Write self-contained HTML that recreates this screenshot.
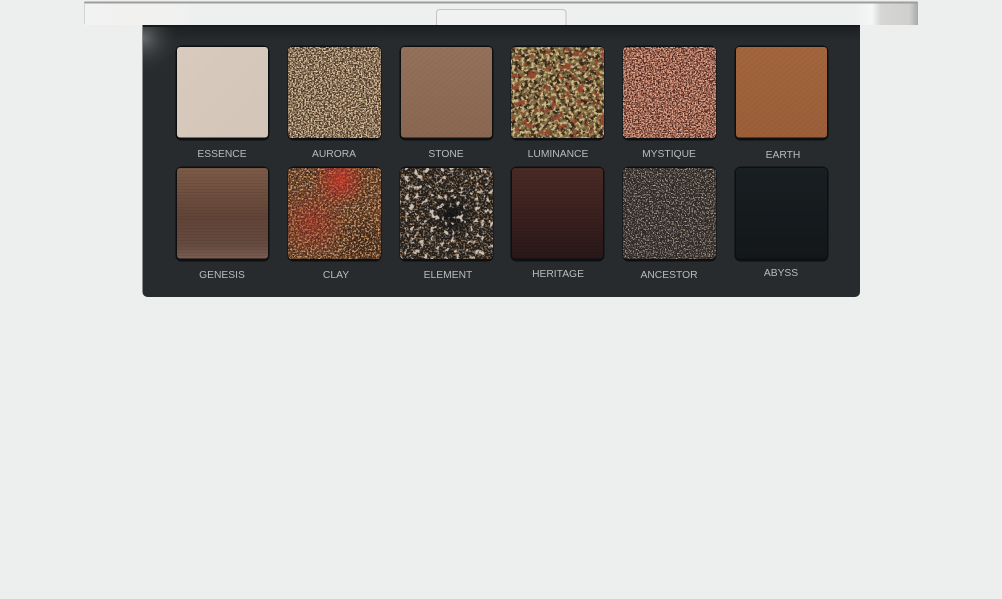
<!DOCTYPE html>
<html lang="en">
<head>
<meta charset="utf-8">
<title>Eyeshadow Palette</title>
<style>
html,body{margin:0;padding:0;background:#edefee;width:1002px;height:599px;overflow:hidden}
svg{display:block}
text{font-family:"Liberation Sans",sans-serif;font-size:10.3px;fill:#b9bcbe;text-anchor:middle}
</style>
</head>
<body>
<svg width="1002" height="599" viewBox="0 0 1002 599" xmlns="http://www.w3.org/2000/svg">
<defs>
<linearGradient id="lid" x1="0" x2="1" y1="0" y2="0">
<stop offset="0" stop-color="#f1f2f1"/><stop offset=".1" stop-color="#f1f1f0"/><stop offset=".13" stop-color="#eef0ef"/>
<stop offset=".925" stop-color="#eef0ef"/><stop offset=".945" stop-color="#f6f6f6"/><stop offset=".955" stop-color="#d6d6d5"/><stop offset=".99" stop-color="#cfcfce"/><stop offset="1" stop-color="#a8a8a7"/>
</linearGradient>
<linearGradient id="band" x1="0" x2="0" y1="0" y2="1"><stop offset="0" stop-color="#1c2023"/><stop offset="1" stop-color="#272b2e"/></linearGradient>
<radialGradient id="shine" gradientUnits="userSpaceOnUse" cx="143" cy="38" r="38">
<stop offset="0" stop-color="#7a7d7d" stop-opacity=".8"/><stop offset=".45" stop-color="#54585a" stop-opacity=".4"/><stop offset="1" stop-color="#272b2e" stop-opacity="0"/>
</radialGradient>
<linearGradient id="ess" x1="0" y1="0" x2="1" y2="1"><stop offset="0" stop-color="#d8cbbe"/><stop offset="1" stop-color="#d3c5b8"/></linearGradient>
<linearGradient id="sto" x1="0" y1="0" x2="0" y2="1"><stop offset="0" stop-color="#94715b"/><stop offset="1" stop-color="#8a6751"/></linearGradient>
<linearGradient id="ear" x1="0" y1="0" x2="0" y2="1"><stop offset="0" stop-color="#a3653d"/><stop offset="1" stop-color="#9c5f39"/></linearGradient>
<linearGradient id="gen" x1="0" y1="0" x2="0" y2="1"><stop offset="0" stop-color="#7c5a47"/><stop offset=".55" stop-color="#614437"/><stop offset=".85" stop-color="#654a3f"/><stop offset="1" stop-color="#7a5c52"/></linearGradient>
<linearGradient id="her" x1="0" y1="0" x2="0" y2="1"><stop offset="0" stop-color="#4a2a25"/><stop offset=".6" stop-color="#381f1d"/><stop offset="1" stop-color="#281719"/></linearGradient>
<linearGradient id="aby" x1="0" y1="0" x2="0" y2="1"><stop offset="0" stop-color="#191e21"/><stop offset="1" stop-color="#13171a"/></linearGradient>
<pattern id="lines" width="3" height="3" patternUnits="userSpaceOnUse"><rect width="3" height="1" fill="#000" opacity=".06"/></pattern>
<pattern id="diag" width="4" height="4" patternUnits="userSpaceOnUse" patternTransform="rotate(-40)"><rect width="4" height="1.500" fill="#000" opacity=".03"/></pattern>

<filter id="aurL" x="0" y="0" width="1" height="1" color-interpolation-filters="sRGB"><feTurbulence type="fractalNoise" baseFrequency=".62 .7" numOctaves="3" seed="4"/><feColorMatrix values="0 0 0 0 .85 0 0 0 0 .78 0 0 0 0 .64 6 0 0 0 -2.7"/></filter>
<filter id="aurM" x="0" y="0" width="1" height="1" color-interpolation-filters="sRGB"><feTurbulence type="fractalNoise" baseFrequency=".6" numOctaves="3" seed="11"/><feColorMatrix values="0 0 0 0 .46 0 0 0 0 .32 0 0 0 0 .24 6 0 0 0 -2.6"/></filter>
<filter id="lumL" x="0" y="0" width="1" height="1" color-interpolation-filters="sRGB"><feTurbulence type="fractalNoise" baseFrequency=".32" numOctaves="4" seed="8"/><feColorMatrix values="0 0 0 0 .80 0 0 0 0 .73 0 0 0 0 .52 6 0 0 0 -2.9"/></filter>
<filter id="lumM" x="0" y="0" width="1" height="1" color-interpolation-filters="sRGB"><feTurbulence type="fractalNoise" baseFrequency=".2" numOctaves="4" seed="21"/><feColorMatrix values="0 0 0 0 .50 0 0 0 0 .41 0 0 0 0 .26 5 0 0 0 -1.9"/></filter>
<filter id="lumR" x="0" y="0" width="1" height="1" color-interpolation-filters="sRGB"><feTurbulence type="fractalNoise" baseFrequency=".14" numOctaves="3" seed="5"/><feColorMatrix values="0 0 0 0 .60 0 0 0 0 .27 0 0 0 0 .18 9 0 0 0 -5.4"/></filter>
<filter id="mysL" x="0" y="0" width="1" height="1" color-interpolation-filters="sRGB"><feTurbulence type="fractalNoise" baseFrequency=".65 .72" numOctaves="3" seed="14"/><feColorMatrix values="0 0 0 0 .89 0 0 0 0 .68 0 0 0 0 .58 6 0 0 0 -2.75"/></filter>
<filter id="mysM" x="0" y="0" width="1" height="1" color-interpolation-filters="sRGB"><feTurbulence type="fractalNoise" baseFrequency=".6" numOctaves="3" seed="31"/><feColorMatrix values="0 0 0 0 .64 0 0 0 0 .36 0 0 0 0 .28 6 0 0 0 -2.6"/></filter>
<filter id="claL" x="0" y="0" width="1" height="1" color-interpolation-filters="sRGB"><feTurbulence type="fractalNoise" baseFrequency=".55" numOctaves="3" seed="2"/><feColorMatrix values="0 0 0 0 .82 0 0 0 0 .62 0 0 0 0 .42 6 0 0 0 -3"/></filter>
<filter id="claD" x="0" y="0" width="1" height="1" color-interpolation-filters="sRGB"><feTurbulence type="fractalNoise" baseFrequency=".6" numOctaves="3" seed="17"/><feColorMatrix values="0 0 0 0 .2 0 0 0 0 .12 0 0 0 0 .08 6 0 0 0 -3"/></filter>
<filter id="eleL" x="0" y="0" width="1" height="1" color-interpolation-filters="sRGB"><feTurbulence type="fractalNoise" baseFrequency=".2" numOctaves="3" seed="9"/><feColorMatrix values="0 0 0 0 .80 0 0 0 0 .75 0 0 0 0 .70 8 0 0 0 -4.6"/></filter>
<filter id="eleM" x="0" y="0" width="1" height="1" color-interpolation-filters="sRGB"><feTurbulence type="fractalNoise" baseFrequency=".55" numOctaves="3" seed="25"/><feColorMatrix values="0 0 0 0 .56 0 0 0 0 .44 0 0 0 0 .32 6 0 0 0 -3"/></filter>
<filter id="ancL" x="0" y="0" width="1" height="1" color-interpolation-filters="sRGB"><feTurbulence type="fractalNoise" baseFrequency=".75" numOctaves="3" seed="6"/><feColorMatrix values="0 0 0 0 .70 0 0 0 0 .63 0 0 0 0 .58 7 0 0 0 -3.7"/></filter>

<clipPath id="c1"><rect x="288" y="47" width="93" height="91" rx="4"/></clipPath>
<clipPath id="c2"><rect x="511" y="47" width="93" height="91" rx="4"/></clipPath>
<clipPath id="c3"><rect x="623" y="47" width="93" height="91" rx="4"/></clipPath>
<clipPath id="c4"><rect x="288" y="168" width="93" height="91" rx="4"/></clipPath>
<clipPath id="c5"><rect x="400" y="168" width="93" height="91" rx="4"/></clipPath>
<clipPath id="c6"><rect x="623" y="168" width="93" height="91" rx="4"/></clipPath>

<radialGradient id="claR1" gradientUnits="userSpaceOnUse" cx="340" cy="180" r="28"><stop offset="0" stop-color="#d0332a" stop-opacity=".95"/><stop offset="1" stop-color="#c22a1e" stop-opacity="0"/></radialGradient>
<radialGradient id="claR2" gradientUnits="userSpaceOnUse" cx="312" cy="222" r="36"><stop offset="0" stop-color="#b42e22" stop-opacity=".85"/><stop offset="1" stop-color="#a82c20" stop-opacity="0"/></radialGradient>
<radialGradient id="claD2" gradientUnits="userSpaceOnUse" cx="365" cy="243" r="32"><stop offset="0" stop-color="#2a1c14" stop-opacity=".7"/><stop offset="1" stop-color="#2a1c14" stop-opacity="0"/></radialGradient>
<radialGradient id="eleB" gradientUnits="userSpaceOnUse" cx="452" cy="215" r="26"><stop offset="0" stop-color="#101214" stop-opacity=".95"/><stop offset="1" stop-color="#101214" stop-opacity="0"/></radialGradient>
</defs>

<rect width="1002" height="599" fill="#edefee"/>

<!-- palette body -->
<rect x="142.500" y="20" width="717.500" height="277" rx="5" fill="#272b2e"/>
<rect x="143" y="26" width="717" height="16" fill="url(#band)"/>
<rect x="142.500" y="25" width="717.500" height="1.500" fill="#16181a"/>
<rect x="143" y="27" width="60" height="50" fill="url(#shine)"/>

<!-- lid -->
<rect x="84" y="2" width="834" height="23" fill="url(#lid)"/>
<rect x="84" y="1.500" width="834" height="2" rx="1" fill="#9c9e9c"/>
<rect x="84" y="3" width="1" height="21" fill="#d2d3d2"/>
<path d="M436.500 25V13q0-3.500 3.500-3.500h122.500q3.500 0 3.500 3.500V25" fill="#f0f1f0" stroke="#c2c4c3" stroke-width="1"/>

<!-- pan wells -->
<g fill="#0e0f10">
<rect x="175.500" y="45.500" width="94" height="95" rx="6"/><rect x="287.500" y="45.500" width="94" height="95" rx="6"/>
<rect x="399.500" y="45.500" width="94" height="95" rx="6"/><rect x="510.500" y="45.500" width="94" height="95" rx="6"/>
<rect x="622.500" y="45.500" width="94" height="95" rx="6"/><rect x="734.500" y="45.500" width="94" height="95" rx="6"/>
<rect x="175.500" y="166.500" width="94" height="95" rx="6"/><rect x="287.500" y="166.500" width="94" height="95" rx="6"/>
<rect x="399.500" y="166.500" width="94" height="95" rx="6"/><rect x="510.500" y="166.500" width="94" height="95" rx="6"/>
<rect x="622.500" y="166.500" width="94" height="95" rx="6"/><rect x="734.500" y="166.500" width="94" height="95" rx="6"/>
</g>

<!-- row 1 -->
<rect x="177" y="47" width="91" height="90.500" rx="3" fill="url(#ess)"/>

<g clip-path="url(#c1)">
<rect x="288" y="47" width="93" height="91" fill="#3f2d20"/>
<rect x="288" y="47" width="93" height="91" filter="url(#aurM)"/>
<rect x="288" y="47" width="93" height="91" filter="url(#aurL)"/>
</g>

<rect x="401" y="47" width="91" height="90.500" rx="3" fill="url(#sto)"/>
<rect x="401" y="47" width="91" height="90.500" rx="3" fill="url(#diag)"/>

<g clip-path="url(#c2)">
<rect x="511" y="47" width="93" height="91" fill="#352619"/>
<rect x="511" y="47" width="93" height="91" filter="url(#lumM)"/>
<rect x="511" y="47" width="93" height="91" filter="url(#lumL)"/>
<rect x="511" y="47" width="93" height="91" filter="url(#lumR)"/>
</g>

<g clip-path="url(#c3)">
<rect x="623" y="47" width="93" height="91" fill="#43201a"/>
<rect x="623" y="47" width="93" height="91" filter="url(#mysM)"/>
<rect x="623" y="47" width="93" height="91" filter="url(#mysL)"/>
</g>

<rect x="736" y="47" width="91" height="90.500" rx="3" fill="url(#ear)"/>
<rect x="736" y="47" width="91" height="90.500" rx="3" fill="url(#diag)"/>

<!-- row 2 -->
<rect x="177" y="168" width="91" height="90.500" rx="3" fill="url(#gen)"/>
<rect x="177" y="168" width="91" height="90.500" rx="3" fill="url(#lines)"/>

<g clip-path="url(#c4)">
<rect x="288" y="168" width="93" height="91" fill="#65402c"/>
<rect x="288" y="168" width="93" height="91" filter="url(#claD)"/>
<rect x="288" y="168" width="93" height="91" fill="url(#claD2)"/>
<rect x="288" y="168" width="93" height="91" filter="url(#claL)"/>
<rect x="288" y="168" width="93" height="91" fill="url(#claR1)" opacity=".8"/>
<rect x="288" y="168" width="93" height="91" fill="url(#claR2)" opacity=".6"/>
</g>

<g clip-path="url(#c5)">
<rect x="400" y="168" width="93" height="91" fill="#211f1e"/>
<rect x="400" y="168" width="93" height="91" filter="url(#eleM)"/>
<rect x="400" y="168" width="93" height="91" fill="url(#eleB)"/>
<rect x="400" y="168" width="93" height="91" filter="url(#eleL)"/>
</g>

<rect x="512" y="168" width="91" height="90.500" rx="3" fill="url(#her)"/>
<rect x="512" y="168" width="91" height="90.500" rx="3" fill="url(#lines)"/>

<g clip-path="url(#c6)">
<rect x="623" y="168" width="93" height="91" fill="#2f2a27"/>
<rect x="623" y="168" width="93" height="91" filter="url(#ancL)"/>
</g>

<rect x="736" y="168" width="91" height="90.500" rx="3" fill="url(#aby)"/>

<!-- labels -->
<text x="222" y="157">ESSENCE</text>
<text x="334" y="157">AURORA</text>
<text x="446" y="157">STONE</text>
<text x="558" y="157">LUMINANCE</text>
<text x="669" y="157">MYSTIQUE</text>
<text x="783" y="158">EARTH</text>
<text x="222" y="278">GENESIS</text>
<text x="336" y="278">CLAY</text>
<text x="448" y="278">ELEMENT</text>
<text x="558" y="277">HERITAGE</text>
<text x="669" y="278">ANCESTOR</text>
<text x="781" y="276">ABYSS</text>
</svg>
</body>
</html>
